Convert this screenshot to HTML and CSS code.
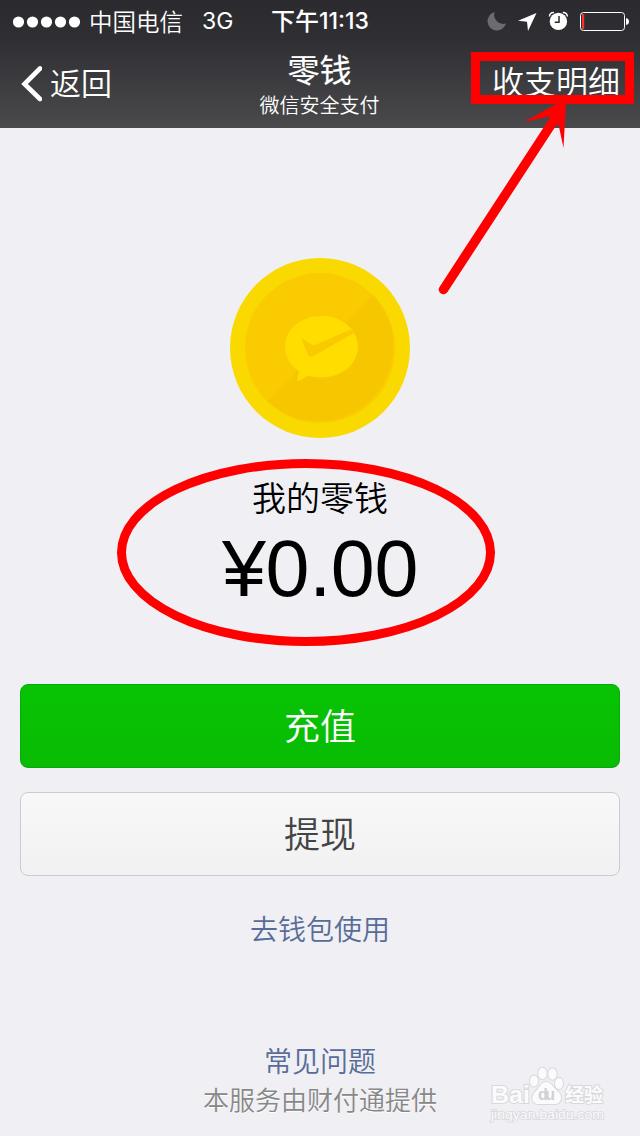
FILE: index.html
```html
<!DOCTYPE html>
<html lang="zh-CN">
<head>
<meta charset="utf-8">
<title>零钱</title>
<link rel="stylesheet" href="styles.css">
</head>
<body>
<div class="screen">
  <header class="top">
    <div class="status">
      <div class="status-left">
        <svg class="signal" width="68" height="12" viewBox="0 0 68 12" fill="#fff"><circle cx="5.500" cy="6" r="5.600"/><circle cx="19.500" cy="6" r="5.600"/><circle cx="33.500" cy="6" r="5.600"/><circle cx="47.500" cy="6" r="5.600"/><circle cx="61.500" cy="6" r="5.600"/></svg>
        <span class="carrier">中国电信</span>
        <span class="network">3G</span>
      </div>
      <div class="clock">下午<span class="digits">11:13</span></div>
      <svg class="status-icons" width="144" height="24" viewBox="486 8 144 24">
        <path d="M494.600 11A9.400 9.400 0 1 0 506 22.500A9.200 9.200 0 0 1 494.600 11Z" fill="#6b6b70"/>
        <path d="M536.500 12L518 19.700L527 20.700L528 30Z" fill="#fff"/>
        <circle cx="558.400" cy="20.400" r="8.700" fill="#fff"/>
        <path d="M549.500 15.500Q549.500 11.500 554 11.600M562.800 11.600Q567.300 11.500 567.300 15.500" fill="none" stroke="#fff" stroke-width="1.500"/>
        <path d="M559 15V21.300H554.700" fill="none" stroke="#2d2d31" stroke-width="1.500"/>
        <rect x="580.500" y="11.500" width="44" height="18" rx="3" fill="none" stroke="#fff"/>
        <rect x="582" y="13" width="2.200" height="15" fill="#ff3028"/>
        <path d="M626 17Q629 17.500 629 20.500Q629 23.500 626 24Z" fill="#fff"/>
      </svg>
    </div>
    <nav class="nav">
      <a class="back"><svg width="22" height="36" viewBox="0 0 22 36"><path d="M20 2.500L4.500 18L20 33" fill="none" stroke="#fff" stroke-width="4.600" stroke-linecap="round" stroke-linejoin="miter"/></svg><span>返回</span></a>
      <div class="heading"><h1>零钱</h1><p>微信安全支付</p></div>
      <a class="detail">收支明细</a>
    </nav>
  </header>
  <main class="wallet">
    <svg class="coin" width="180" height="180" viewBox="0 0 180 180">
      <circle cx="90" cy="90" r="90" fill="#fad900"/>
      <circle cx="90" cy="90" r="75" fill="#facb00"/>
      <path d="M143 37A75 75 0 0 1 37 143Z" fill="#f6c700"/>
      <path d="M91.500 58C112 58 128 71.500 128 88.500S112 119.500 91.500 119.500Q84.500 119.500 78 117.700L69 122.700Q66.800 123.500 67.200 121L69 113.300C60 107.800 55 99 55 88.500C55 71.500 71 58 91.500 58Z" fill="#ffdd00"/>
      <path d="M72 82.200Q71 80 73 81L81 86.600Q83 88 85.500 86.800L121 71.500L124 75L83 98.300Q80 100 78 96.500Z" fill="#f9ca00"/>
    </svg>
    <p class="label">我的零钱</p>
    <p class="amount">¥0.00</p>
    <button class="button primary">充值</button>
    <button class="button secondary">提现</button>
    <a class="link use">去钱包使用</a>
    <a class="link faq">常见问题</a>
    <p class="provider">本服务由财付通提供</p>
  </main>
  <svg class="watermark" width="124" height="64" viewBox="486 1062 124 64" fill="#fbfbfc" stroke="#d9d9dd" stroke-width="2" paint-order="stroke">
    <text class="brand" x="491" y="1103" textLength="39" lengthAdjust="spacingAndGlyphs">Bai</text>
    <ellipse cx="534" cy="1081" rx="4" ry="5.500"/>
    <ellipse cx="542.500" cy="1073.500" rx="4.200" ry="5.800"/>
    <ellipse cx="552.500" cy="1074" rx="4.200" ry="5.800"/>
    <ellipse cx="559" cy="1083.500" rx="4" ry="5.500"/>
    <path d="M546 1082C551 1082 553 1087 557.500 1091C564 1096 561 1104 555 1104H538C532 1104 530 1096 536 1091C540 1087 541 1082 546 1082Z"/>
    <text class="du" x="538" y="1100" textLength="17">du</text>
    <text class="brand-cn" x="565" y="1102" textLength="38">经验</text>
    <text class="domain" x="491" y="1119" textLength="113" lengthAdjust="spacingAndGlyphs">jingyan.baidu.com</text>
  </svg>
  <svg class="annotations" width="640" height="1136" viewBox="0 0 640 1136" fill="none" stroke="#f00">
    <rect x="475.500" y="56.500" width="154" height="43" stroke-width="9"/>
    <ellipse cx="306" cy="552.500" rx="184.500" ry="89" stroke-width="9"/>
    <path d="M443.500 289.500L558 114" stroke-width="9.500" stroke-linecap="round"/>
    <path d="M566 101L563.500 148L558 122L549 116.500L524 122L558 103Z" fill="#f00" stroke="none"/>
  </svg>
</div>
</body>
</html>
```
FILE: styles.css
```css
* { box-sizing: border-box; }
body, h1, p { margin: 0; }
body { font-family: "Liberation Sans", "Noto Sans CJK SC", sans-serif; font-weight: 350; background: #efeff4; }
.screen { position: relative; width: 640px; height: 1136px; overflow: hidden; background: #efeff4; }
.top { height: 128px; color: #fff; background: linear-gradient(#2b2b2f, #2f2f33 30%, #4a4a4d); }
.status { height: 40px; display: grid; grid-template-columns: 1fr auto 1fr; align-items: center; padding: 0 10px 0 13px; }
.status-left { display: flex; align-items: center; font-size: 24px; line-height: 40px; }
.signal { margin-top: 2px; }
.carrier { margin-left: 8px; font-size: 23.5px; font-family: "Noto Sans CJK SC", sans-serif; }
.network { margin: 1px 0 0 19px; font-size: 23px; font-family: Inter, sans-serif; font-weight: 400; }
.clock { display: flex; margin-right: 3px; font: 500 24px/40px "Noto Sans CJK SC", sans-serif; }
.digits { font-family: Inter, sans-serif; font-size: 23px; padding-top: 1px; }
.status-icons { justify-self: end; }
.nav { height: 88px; display: grid; grid-template-columns: 1fr auto 1fr; align-items: start; padding: 0 20px; font-family: "Noto Sans CJK SC", sans-serif; }
.back { display: flex; align-items: center; gap: 8px; font-size: 31px; line-height: 40px; padding-top: 21px; }
.back svg { margin-top: 5px; }
.heading { text-align: center; padding: 9px 1px 0 0; }
.heading h1 { font-size: 32px; font-weight: 400; line-height: 38px; -webkit-text-stroke: 0.2px #fff; }
.heading p { font-size: 20px; line-height: 36px; }
.detail { justify-self: end; font-size: 32px; line-height: 40px; padding-top: 20px; }
.wallet { display: flex; flex-direction: column; align-items: center; padding: 130px 20px 0; font-family: "Noto Sans CJK SC", sans-serif; }
.coin { display: block; }
.label { margin-top: 38px; font-size: 34px; line-height: 42px; color: #000; }
.amount { font: 400 79px/92px "Liberation Sans", sans-serif; letter-spacing: -0.3px; margin-top: 5px; color: #000; }
.button { width: 600px; height: 84px; border: 1px solid; border-radius: 8px; padding: 0 0 4px; font: 350 36px/78px "Noto Sans CJK SC", sans-serif; }
.primary { margin-top: 69px; color: #fff; border-color: #08a80a; background: linear-gradient(#08c304, #08bc04); }
.secondary { margin-top: 24px; color: #444; border-color: #cbcbd0; background: linear-gradient(#f8f8f8, #f1f1f1); }
.link { font-size: 28px; line-height: 40px; color: #586c98; }
.use { margin-top: 32px; }
.faq { margin-top: 92px; }
.provider { font-size: 26px; line-height: 38px; color: #888; text-shadow: 0 1px #fff; }
.watermark { position: absolute; left: 486px; top: 1062px; }
.brand { font: 700 24px "Liberation Sans", sans-serif; }
.du { font: 700 16px "Liberation Sans", sans-serif; fill: #d0d0d5; stroke: none; }
.brand-cn { font: 700 19px "Noto Sans CJK SC", sans-serif; }
.domain { font: 400 12px "Liberation Sans", sans-serif; stroke-width: 1.5px; }
.annotations { position: absolute; left: 0; top: 0; }
```
